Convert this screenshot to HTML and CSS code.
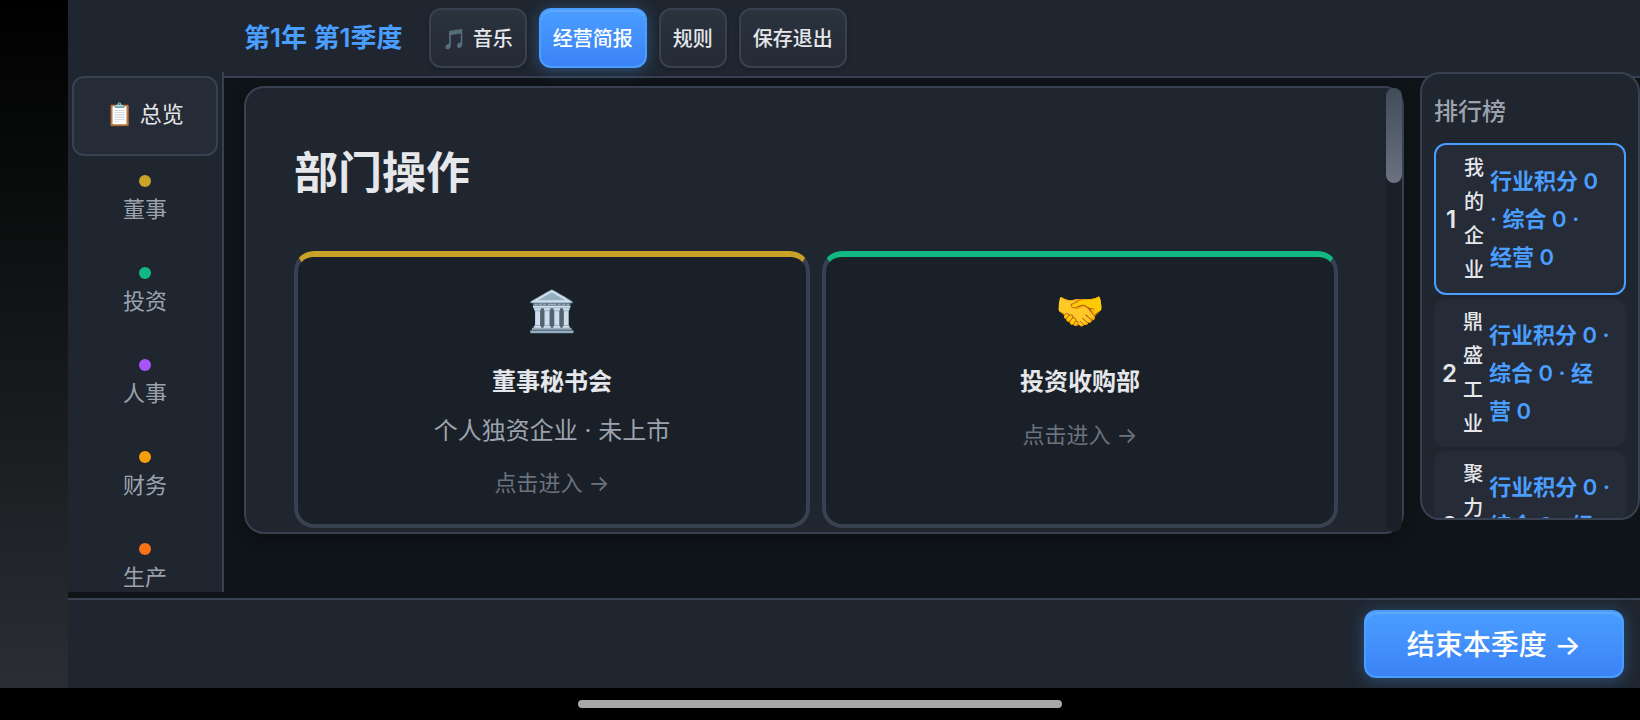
FILE: index.html
```html
<!DOCTYPE html>
<html lang="zh-CN">
<head>
  <meta charset="UTF-8">
  <meta name="viewport" content="width=device-width, initial-scale=1.0">
  <title>部门操作</title>
  <link rel="stylesheet" href="styles.css">
</head>
<body>
  <div class="game">
    <header class="topbar">
      <div class="quarter">第1年 第1季度</div>
      <button class="btn">🎵 音乐</button>
      <button class="btn btn-primary">经营简报</button>
      <button class="btn">规则</button>
      <button class="btn">保存退出</button>
    </header>

    <div class="middle">
      <nav class="sidebar">
        <button class="nav-item active">📋 总览</button>
        <button class="nav-item"><span class="dot board"></span>董事</button>
        <button class="nav-item"><span class="dot invest"></span>投资</button>
        <button class="nav-item"><span class="dot hr"></span>人事</button>
        <button class="nav-item"><span class="dot finance"></span>财务</button>
        <button class="nav-item"><span class="dot produce"></span>生产</button>
      </nav>

      <main class="panel">
        <div class="panel-content">
          <h1>部门操作</h1>
          <div class="cards">
            <button class="card card-board">
              <span class="card-icon">🏛️</span>
              <span class="card-title">董事秘书会</span>
              <span class="card-desc">个人独资企业 · 未上市</span>
              <span class="card-hint">点击进入 →</span>
            </button>
            <button class="card card-invest">
              <span class="card-icon">🤝</span>
              <span class="card-title">投资收购部</span>
              <span class="card-hint">点击进入 →</span>
            </button>
          </div>
        </div>
        <div class="scroll-track"><div class="scroll-thumb"></div></div>
      </main>

      <aside class="ranking">
        <h2>排行榜</h2>
        <ol class="rank-list">
          <li class="rank-item mine">
            <span class="rank-no">1</span>
            <span class="rank-name">我的企业</span>
            <span class="rank-score">行业积分 0<br>· 综合 0 ·<br>经营 0</span>
          </li>
          <li class="rank-item">
            <span class="rank-no">2</span>
            <span class="rank-name">鼎盛工业</span>
            <span class="rank-score">行业积分 0 ·<br>综合 0 · 经<br>营 0</span>
          </li>
          <li class="rank-item">
            <span class="rank-no">3</span>
            <span class="rank-name">聚力科技</span>
            <span class="rank-score">行业积分 0 ·<br>综合 0 · 经<br>营 0</span>
          </li>
        </ol>
      </aside>
    </div>

    <footer class="bottombar">
      <button class="btn btn-primary btn-end">结束本季度 →</button>
    </footer>
  </div>
  <div class="gesture-bar"><div class="gesture-handle"></div></div>
</body>
</html>
```

FILE: styles.css
```css
* {
  box-sizing: border-box;
}

body {
  margin: 0;
  height: 100vh;
  display: flex;
  flex-direction: column;
  overflow: hidden;
  background: linear-gradient(180deg, #000 0%, #0e1011 35%, #2a2d33 95%);
  color: #e5e7eb;
  font-family: Inter, "Noto Sans CJK SC", "Noto Color Emoji", sans-serif;
}

button {
  font-family: inherit;
  color: inherit;
  cursor: pointer;
}

.game {
  flex: 1;
  min-height: 0;
  margin-left: 68px;
  display: flex;
  flex-direction: column;
  overflow: hidden;
  background: #0f1418;
}

/* top bar */
.topbar {
  display: flex;
  align-items: center;
  gap: 12px;
  padding: 8px 16px 8px 176px;
  background: #1f2630;
  border-bottom: 2px solid #374151;
}

.quarter {
  margin-right: 14px;
  color: #4a9eff;
  font-size: 26px;
  font-weight: 600;
  line-height: 40px;
}

.btn {
  height: 60px;
  padding: 0 12px 2px;
  border: 2px solid #374151;
  border-radius: 12px;
  background: linear-gradient(180deg, #2a333e, #252a35);
  box-shadow: 0 2px 4px rgba(0, 0, 0, 0.2);
  font-size: 20px;
  font-weight: 500;
  white-space: nowrap;
}

.btn-primary {
  border-color: #4a9eff;
  background: linear-gradient(180deg, #4a9eff, #3b82f6);
  box-shadow: 0 2px 16px rgba(74, 158, 255, 0.35), inset 0 2px 0 rgba(255, 255, 255, 0.12);
  color: #fff;
}

/* middle */
.middle {
  flex: 1;
  min-height: 0;
  display: flex;
}

.sidebar {
  flex: 0 0 156px;
  display: flex;
  flex-direction: column;
  gap: 4px;
  margin: -6px 0 6px;
  padding: 4px;
  overflow: hidden;
  background: #1f2630;
  border-right: 2px solid #374151;
}

.nav-item {
  flex: 0 0 88px;
  display: flex;
  flex-direction: column;
  align-items: center;
  padding: 15px 0 0;
  border: 0;
  background: none;
  color: #9ca3af;
  font-size: 22px;
  line-height: 36px;
}

.nav-item.active {
  flex-basis: 80px;
  justify-content: center;
  padding: 0 0 4px;
  border: 2px solid #374151;
  border-radius: 12px;
  background: #252c37;
  color: #e5e7eb;
}

.dot {
  width: 12px;
  height: 12px;
  margin-bottom: 4px;
  border-radius: 50%;
}

.board { background: #c9a227; }
.invest { background: #10b981; }
.hr { background: #a855f7; }
.finance { background: #f59e0b; }
.produce { background: #f97316; }

.panel {
  flex: 1;
  min-width: 0;
  display: flex;
  margin: 8px 16px 64px 20px;
  background: #1f2630;
  border: 2px solid #374151;
  border-radius: 20px;
  box-shadow: 0 4px 16px rgba(0, 0, 0, 0.3);
}

.panel-content {
  flex: 1;
  min-width: 0;
  padding: 48px;
  overflow: hidden;
}

h1 {
  margin: 0 0 41px;
  font-size: 44px;
  font-weight: 600;
  line-height: 74px;
}

.scroll-track {
  width: 16px;
  border-radius: 8px;
  background: #1a2027;
}

.scroll-thumb {
  height: 95px;
  border-radius: 8px;
  background: linear-gradient(180deg, #414b5a, #6b7280);
}

.cards {
  display: grid;
  grid-template-columns: 1fr 1fr;
  gap: 12px;
}

.card {
  display: flex;
  flex-direction: column;
  align-items: center;
  justify-content: flex-start;
  padding: 24px 20px 22px;
  border: 4px solid #374151;
  border-top-width: 6px;
  border-radius: 20px;
  background: #1a2027;
}

.card-board { border-top-color: #c9a227; }
.card-invest { border-top-color: #10b981; }

.card-icon {
  margin-bottom: 22px;
  font-size: 40px;
  line-height: 60px;
}

.card-title {
  font-size: 24px;
  font-weight: 600;
  line-height: 38px;
}

.card-desc {
  margin-top: 12px;
  color: #9ca3af;
  font-size: 24px;
  line-height: 36px;
}

.card-hint {
  margin-top: 16px;
  color: #6b7280;
  font-size: 22px;
  line-height: 37px;
}

/* ranking */
.ranking {
  flex: 0 0 220px;
  margin: -6px 0 78px;
  padding: 20px 12px 0;
  overflow: hidden;
  background: #1f2630;
  border: 2px solid #374151;
  border-radius: 20px;
}

h2 {
  margin: 0 0 13px;
  color: #9ca3af;
  font-size: 24px;
  font-weight: 500;
  line-height: 36px;
}

.rank-list {
  display: flex;
  flex-direction: column;
  gap: 4px;
  margin: 0;
  padding: 0;
  list-style: none;
}

.rank-item {
  display: flex;
  align-items: center;
  gap: 6px;
  padding: 6px 8px;
  border-radius: 12px;
  background: #252c37;
}

.rank-item.mine {
  border: 2px solid #4a9eff;
}

.rank-no {
  flex: 0 0 14px;
  font-size: 24px;
  font-weight: 600;
  text-align: center;
}

.rank-name {
  flex: 0 0 20px;
  font-size: 20px;
  font-weight: 500;
  line-height: 34px;
  word-break: break-all;
}

.rank-score {
  color: #4a9eff;
  font-size: 22px;
  font-weight: 600;
  line-height: 38px;
  white-space: nowrap;
}

/* bottom bar */
.bottombar {
  display: flex;
  justify-content: flex-end;
  padding: 10px 16px;
  background: #1f2630;
  border-top: 2px solid #374151;
}

.btn-end {
  height: 68px;
  padding: 0 41px 2px;
  font-size: 28px;
}

.gesture-bar {
  flex: 0 0 32px;
  display: flex;
  align-items: center;
  justify-content: center;
  background: #000;
}

.gesture-handle {
  width: 29.5%;
  height: 8px;
  border-radius: 4px;
  background: #a8a8a8;
}
```
